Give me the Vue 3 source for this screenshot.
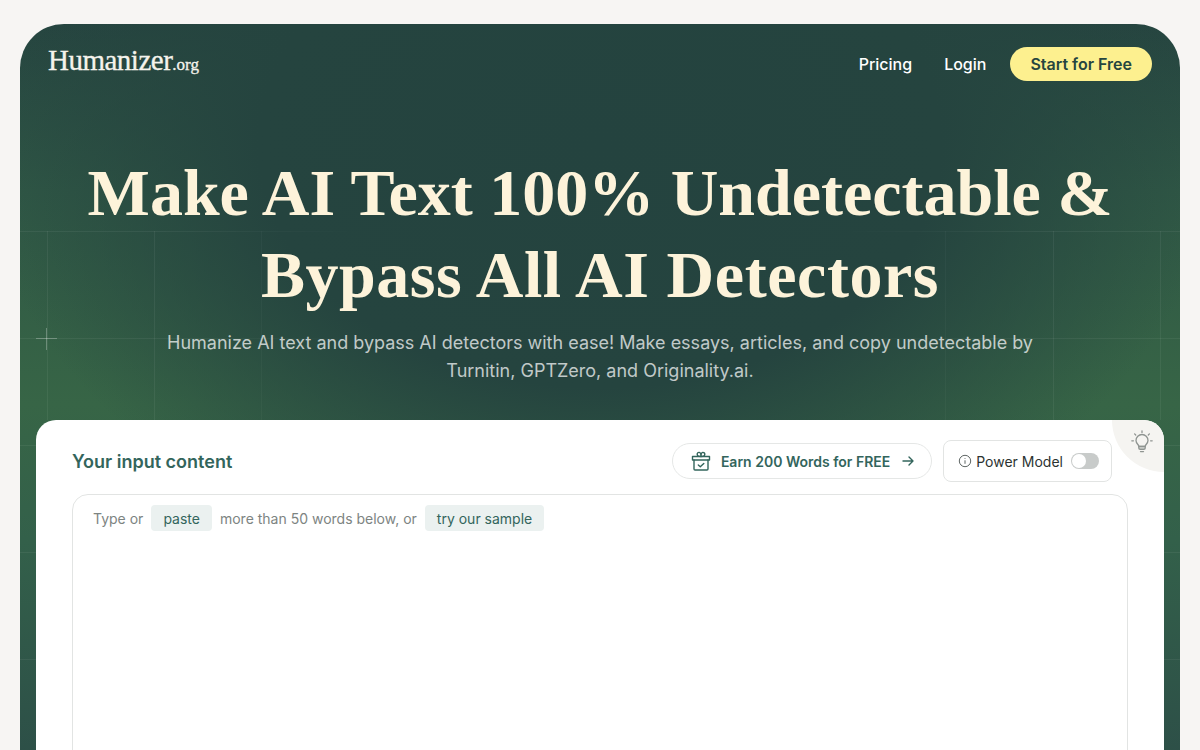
<script setup>
const gridV = [47, 154, 261, 945, 1053, 1160]
const gridH = [231, 338, 445, 552, 659]
</script>

<template>
  <div class="page">
    <section class="hero">
      <svg class="grid" width="1160" height="726" viewBox="20 24 1160 726" aria-hidden="true">
        <g stroke="#fff" stroke-opacity="0.06">
          <line v-for="x in gridV" :key="'v' + x" :x1="x + 0.5" :x2="x + 0.5" y1="231" y2="420" />
          <line v-for="y in gridH" :key="'h' + y" x1="20" x2="1180" :y1="y + 0.5" :y2="y + 0.5" />
        </g>
        <g stroke="#fff" stroke-opacity="0.28">
          <line x1="36" x2="57" y1="338.5" y2="338.5" />
          <line x1="46.500" x2="46.500" y1="328" y2="350" />
        </g>
      </svg>
      <header class="nav">
        <div class="logo">Humanizer<span class="tld">.org</span></div>
        <nav class="links">
          <a class="link">Pricing</a>
          <a class="link">Login</a>
          <a class="cta">Start for Free</a>
        </nav>
      </header>
      <h1 class="title">Make AI Text 100% Undetectable &amp;<br /><span class="title-second">Bypass All AI Detectors</span></h1>
      <p class="sub">Humanize AI text and bypass AI detectors with ease! Make essays, articles, and copy undetectable by<br />Turnitin, GPTZero, and Originality.ai.</p>
      <div class="card">
        <div class="corner">
          <svg width="24" height="24" viewBox="0 0 24 24" fill="none" stroke="#8f9491" stroke-width="1.3" stroke-linecap="round" stroke-linejoin="round">
            <path d="M12 .8v1.600M4.600 3.900l1.100 1.100M19.400 3.900l-1.100 1.100M1.800 10.800h1.600M20.600 10.800h1.600" />
            <path d="M8.800 16.300c0-1.700-2.800-2.800-2.800-5.800a6 6 0 0 1 12 0c0 3-2.800 4.100-2.800 5.800z" />
            <path d="M8.800 16.300h6.400v1.600c0 .8-.6 1.400-1.400 1.400h-3.600c-.8 0-1.400-.6-1.400-1.400z" fill="#8f9491" fill-opacity=".45" />
            <path d="M10.500 21.600h3" />
          </svg>
        </div>
        <div class="card-head">
          <h2 class="card-title">Your input content</h2>
          <div class="actions">
            <a class="earn">
              <svg class="gift" width="22" height="22" viewBox="0 0 22 22" fill="none" stroke="#33655c" stroke-width="1.4" stroke-linecap="round" stroke-linejoin="round">
                <path d="M2.500 6.500h17v3.500h-17z" />
                <path d="M4 10v9c0 .6.400 1 1 1h12c.6 0 1-.4 1-1v-9" />
                <path d="M11 6.500C9 6.500 7.200 6 7.200 4.300 7.200 3 8.200 2.400 9 2.400c1.300 0 2 1.700 2 4.100zM11 6.500c2 0 3.800-.5 3.800-2.200 0-1.300-1-1.900-1.800-1.900-1.300 0-2 1.700-2 4.100z" />
                <path d="M8.300 15l2 1.700 3.500-3.200" />
              </svg>
              <span>Earn 200 Words for FREE</span>
              <svg class="arrow" width="14" height="14" viewBox="0 0 14 14" fill="none" stroke="#33655c" stroke-width="1.400" stroke-linecap="round" stroke-linejoin="round">
                <path d="M2 7h10M8 3l4 4-4 4" />
              </svg>
            </a>
            <div class="power">
              <svg width="14" height="14" viewBox="0 0 14 14" fill="none" stroke="#5f6664" stroke-width="1">
                <circle cx="7" cy="7" r="5.700" />
                <path d="M7 6.300v3.500M7 4.100v.8" />
              </svg>
              <span class="power-label">Power Model</span>
              <span class="toggle"><span class="knob"></span></span>
            </div>
          </div>
        </div>
        <div class="editor">
          <div class="hint">
            <span>Type or</span>
            <span class="chip">paste</span>
            <span>more than 50 words below, or</span>
            <span class="chip">try our sample</span>
          </div>
        </div>
      </div>
    </section>
  </div>
</template>

<style>
html, body { margin: 0; height: 100%; overflow: hidden; background: #f7f5f3; }
</style>

<style scoped>
.page {
  height: 750px;
  box-sizing: border-box;
  padding: 24px 20px 0;
  overflow: hidden;
  background: #f7f5f3;
  font-family: Inter, "Liberation Sans", sans-serif;
}
.hero {
  position: relative;
  height: 760px;
  padding: 0 16px;
  box-sizing: border-box;
  border-radius: 44px 44px 0 0;
  overflow: hidden;
  background:
    radial-gradient(ellipse 620px 440px at 50% 16%, #24433f 0%, #25443f 55%, rgba(38, 70, 63, 0) 100%),
    linear-gradient(180deg, #264540 0%, #2f5745 22%, #376546 50%, #33604a 68%, #2c4d47 100%);
}
.grid {
  position: absolute;
  left: 0;
  top: 0;
  pointer-events: none;
  -webkit-mask-image: linear-gradient(90deg, #000 0, #000 12%, transparent 30%, transparent 70%, #000 88%);
  mask-image: linear-gradient(90deg, #000 0, #000 12%, transparent 30%, transparent 70%, #000 88%);
}
.nav {
  position: relative;
  display: flex;
  align-items: center;
  justify-content: space-between;
  padding: 23px 12px 0;
  height: 57px;
  box-sizing: border-box;
}
.logo {
  font-family: "Liberation Serif", serif;
  font-size: 29px;
  line-height: 30px;
  color: #f5f3ec;
  letter-spacing: -0.5px;
  -webkit-text-stroke: 0.3px #f5f3ec;
  margin-top: -3px;
}
.tld { font-size: 17px; letter-spacing: 0; }
.links { display: flex; align-items: center; gap: 32px; }
.link { color: #fff; font-size: 16px; font-weight: 500; line-height: 24px; }
.cta {
  height: 34px;
  padding: 0 20px;
  display: flex;
  align-items: center;
  border-radius: 17px;
  background: #fdf08f;
  color: #26453f;
  font-size: 16px;
  font-weight: 600;
  margin-left: -8px;
}
.title {
  position: relative;
  margin: 71px 0 0;
  text-align: center;
  font-family: "Liberation Serif", serif;
  font-weight: 700;
  font-size: 66px;
  line-height: 82px;
  color: #fdf3da;
}
.title-second { letter-spacing: 0.55px; }
.sub {
  position: relative;
  margin: 13px 0 0;
  text-align: center;
  font-size: 18px;
  line-height: 28px;
  color: rgba(255, 255, 255, 0.72);
}
.card {
  position: relative;
  margin-top: 35px;
  height: 400px;
  background: #fff;
  border-radius: 20px 20px 0 0;
  padding: 20px 36px 0;
  box-sizing: border-box;
  overflow: hidden;
}
.corner {
  position: absolute;
  right: 0;
  top: 0;
  width: 42px;
  height: 42px;
  padding: 10px 10px 0 0;
  background: #f5f4f1;
  border-bottom-left-radius: 52px;
  display: flex;
  align-items: flex-start;
  justify-content: flex-end;
}
.card-head {
  display: flex;
  align-items: center;
  justify-content: space-between;
  height: 42px;
  margin-right: 16px;
}
.card-title {
  margin: 0;
  font-size: 18px;
  font-weight: 600;
  color: #33655c;
}
.actions { display: flex; align-items: center; gap: 11px; }
.earn {
  display: flex;
  align-items: center;
  height: 36px;
  box-sizing: border-box;
  padding: 0 16px 0 17px;
  border: 1px solid #e5e7e6;
  border-radius: 18px;
  color: #33655c;
  font-size: 14px;
  font-weight: 600;
}
.gift { margin-right: 9px; }
.arrow { margin-left: 11px; }
.power {
  display: flex;
  align-items: center;
  height: 42px;
  box-sizing: border-box;
  padding: 0 12px 0 14px;
  border: 1px solid #e2e4e3;
  border-radius: 8px;
  font-size: 14px;
  color: #2c3331;
  gap: 4px;
}
.power-label { margin-right: 4px; }
.toggle {
  width: 28px;
  height: 16px;
  border-radius: 8px;
  background: #c8cbca;
  position: relative;
}
.knob {
  position: absolute;
  left: 1px;
  top: 1px;
  width: 14px;
  height: 14px;
  border-radius: 50%;
  background: #fff;
}
.editor {
  margin-top: 12px;
  height: 400px;
  border: 1px solid #e2e4e3;
  border-radius: 16px;
  padding: 10px 20px;
  box-sizing: border-box;
}
.hint {
  display: flex;
  align-items: center;
  gap: 8px;
  font-size: 14px;
  color: #7d8482;
}
.chip {
  height: 26px;
  padding: 0 12px;
  display: flex;
  align-items: center;
  background: #ebf1f0;
  border-radius: 4px;
  color: #33655c;
}
</style>
